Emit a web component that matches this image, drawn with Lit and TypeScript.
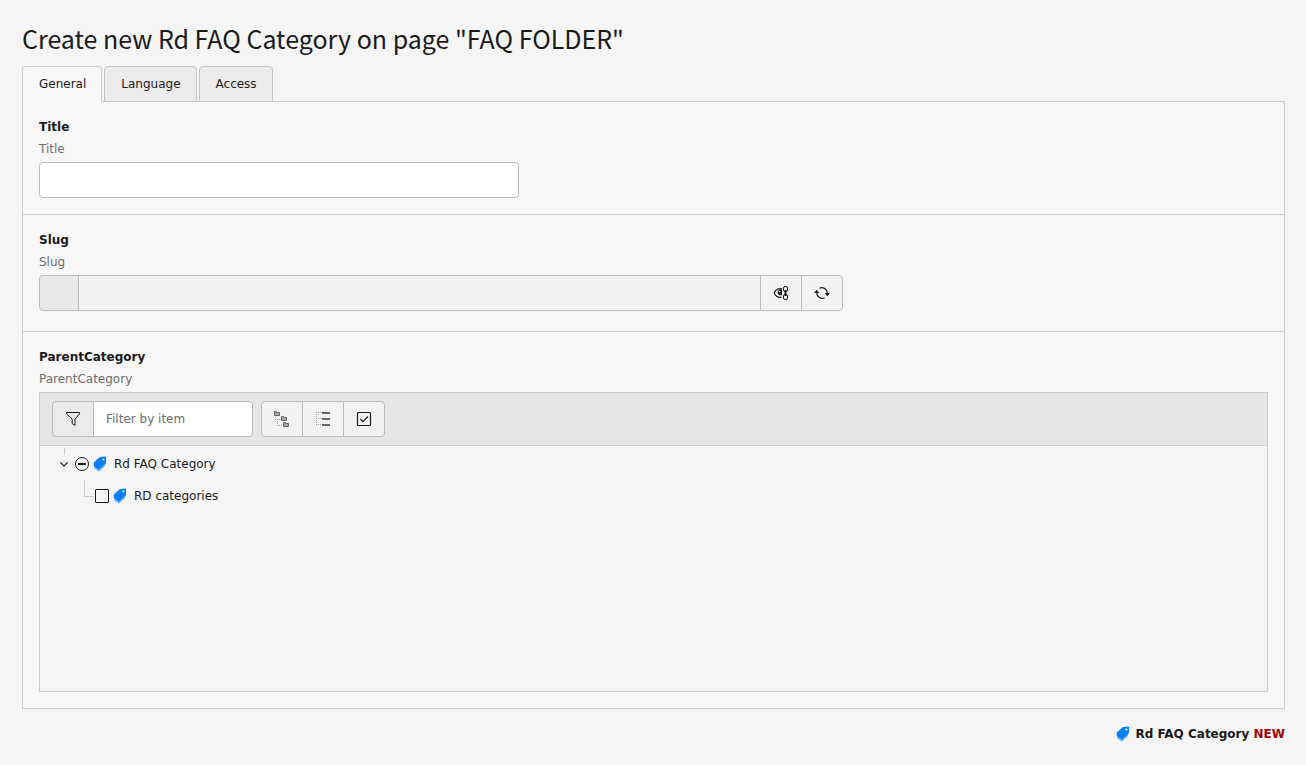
import { LitElement, html, svg, css } from "lit";
import { customElement, property, state } from "lit/decorators.js";
import { classMap } from "lit/directives/class-map.js";

const tagIcon = html`<svg class="icon" viewBox="0 0 16 16" aria-hidden="true">
  <path fill="#66b3ff" d="M2.300 8.500v4L7 15.600l6-5.600.500-4z" />
  <path fill="#0a80f5" d="M1.800 6.600 7.300 1.500q.5-.4 1.200-.500L13.200.5q.8 0 .8.8v5.200q0 .600-.500 1L7 13.400 1.800 10z" />
  <circle fill="#fff" cx="11.400" cy="3.600" r="1" />
</svg>`;

const dots = (points: number[][]) =>
  points.map(([x, y]) => svg`<rect fill="#999" x=${x} y=${y} width="1" height="1" />`);

const folder = (x: number, y: number) =>
  svg`<path fill="#aaa" stroke="#666" d="M${x + 0.5} ${y + 0.5}h2v1h3v3h-5z" />`;

const filterIcon = html`<svg class="icon" viewBox="0 0 16 16" aria-hidden="true">
  <path fill="none" stroke="#1a1a1a" d="M1.500 1.500h13v1.300L10 8.200v6.100l-2.800-1.600V8.200L1.500 2.800z" />
</svg>`;

const expandIcon = html`<svg class="icon" viewBox="0 0 16 16" aria-hidden="true">
  ${folder(0, 0)}${folder(7, 5)}${folder(9, 11)}
  ${dots([[1, 6], [1, 8], [3, 8], [5, 8], [3, 10], [3, 12], [3, 14], [5, 14], [7, 14]])}
</svg>`;

const collapseIcon = html`<svg class="icon" viewBox="0 0 16 16" aria-hidden="true">
  <path fill="#666" d="M7 1h8v2H7zM7 7h8v2H7zM7 13h8v2H7z" />
  ${dots([[1, 1], [3, 1], [5, 1], [1, 3], [1, 5], [1, 7], [3, 7], [5, 7], [1, 9], [1, 11], [1, 13], [3, 13], [5, 13]])}
</svg>`;

const checkedIcon = html`<svg class="icon" viewBox="0 0 16 16" aria-hidden="true">
  <rect x="1.500" y="1.500" width="13" height="13" rx="1" fill="none" stroke="#1a1a1a" stroke-width="1.200" />
  <path d="m4.300 8 2.600 2.600 5.100-5.100" fill="none" stroke="#1a1a1a" stroke-width="1.200" />
</svg>`;

const slugToggleIcon = html`<svg class="icon" viewBox="0 0 16 16" aria-hidden="true">
  <path fill="none" stroke="#1a1a1a" stroke-width="1.200" d="M9 3.800C5 3 2.200 5.300 1.300 8c.9 2.600 3.700 4.600 7.200 4.300" />
  <path fill="#1a1a1a" d="M9 4.500C6 3.800 4.300 5.800 4.600 8c.4 2 2.300 2.700 4.400 2.100z" />
  <circle cx="6.500" cy="6.500" r=".8" fill="#f2f2f2" />
  <rect x="10.500" y="1.500" width="4" height="5" rx="1.500" fill="none" stroke="#1a1a1a" />
  <rect x="10.500" y="9.500" width="4" height="5" rx="1.500" fill="none" stroke="#1a1a1a" />
  <path stroke="#1a1a1a" stroke-width="2" d="M12.500 5v6" />
</svg>`;

const refreshIcon = html`<svg class="icon" viewBox="0 0 16 16" aria-hidden="true">
  <path fill="none" stroke="#1a1a1a" stroke-width="1.200" d="M5.500 3.300C9 1.600 13.300 4 13.300 8M10.500 12.700C7 14.400 2.700 12 2.700 8" />
  <path fill="#1a1a1a" d="M10.600 8H16l-2.700 3.200zM0 8h5.400L2.700 4.800z" />
</svg>`;

const chevronIcon = html`<svg class="icon" viewBox="0 0 16 16" aria-hidden="true">
  <path fill="none" stroke="#1a1a1a" stroke-width="1.200" d="m4.300 6.300 3.700 3.700 3.700-3.700" />
</svg>`;

const shared = css`
  * { box-sizing: border-box; }
  button, input { font: inherit; color: inherit; margin: 0; }
  .icon { display: block; width: 16px; height: 16px; flex: none; }
  .group { display: flex; height: 36px; }
  .group > * { border: 1px solid #bbb; border-radius: 0; }
  .group > * + * { margin-left: -1px; }
  .group > :first-child { border-radius: 4px 0 0 4px; }
  .group > :last-child { border-radius: 0 4px 4px 0; }
  .group > input { flex: 1; min-width: 0; padding: 0 12px; background: #fff; }
  .button {
    display: flex; align-items: center; justify-content: center;
    width: 42px; padding: 0; background: #f2f2f2; cursor: pointer;
  }
  .addon { display: flex; align-items: center; justify-content: center; width: 40px; background: #e8e8e8; }
  input::placeholder { color: #6e6e6e; opacity: 1; }
`;

@customElement("category-tree")
class CategoryTree extends LitElement {
  @state() private open = true;

  static styles = [shared, css`
    :host { display: block; border: 1px solid #ccc; background: #f5f5f5; min-height: 300px; }
    .toolbar { display: flex; gap: 8px; padding: 8px 12px; background: #e6e6e6; border-bottom: 1px solid #ccc; }
    .filter { width: 201px; }
    .filter .addon { width: 42px; background: #ebebeb; }
    .tree { margin: 0; padding: 2px 16px; list-style: none; }
    .row { display: flex; align-items: center; height: 32px; }
    .children { margin: 0; padding: 0 0 0 28px; list-style: none; }
    .toggle { display: flex; margin-right: 2px; padding: 0; border: 0; background: none; cursor: pointer; }
    .check { appearance: none; width: 14px; height: 14px; margin: 0 3px 0 1px; border: 1px solid #1a1a1a; border-radius: 1px; }
    .check:indeterminate {
      border-radius: 50%;
      background: linear-gradient(#1a1a1a, #1a1a1a) center / 8px 2px no-repeat;
    }
    .check:checked { background: linear-gradient(#1a1a1a, #1a1a1a) center / 8px 8px no-repeat; }
    .name { padding-left: 6px; }
    .trunk {
      background:
        linear-gradient(#ccc, #ccc) 8px 0 / 1px 7px no-repeat,
        linear-gradient(#ccc, #ccc) 16px 16px / 2px 1px no-repeat;
    }
    .branch { align-self: flex-start; width: 10px; height: 17px; border: solid #ccc; border-width: 0 0 1px 1px; }
  `];

  render() {
    return html`
      <div class="toolbar">
        <div class="group filter">
          <label class="addon" for="filter" aria-label="Filter">${filterIcon}</label>
          <input id="filter" type="text" placeholder="Filter by item" />
        </div>
        <div class="group">
          <button class="button" aria-label="Expand all" @click=${() => (this.open = true)}>${expandIcon}</button>
          <button class="button" aria-label="Collapse all" @click=${() => (this.open = false)}>${collapseIcon}</button>
          <button class="button" aria-label="Toggle checked">${checkedIcon}</button>
        </div>
      </div>
      <ul class="tree">
        <li>
          <div class="row trunk">
            <button class="toggle" aria-label="Toggle children" @click=${() => (this.open = !this.open)}>${chevronIcon}</button>
            <input class="check" id="root" type="checkbox" .indeterminate=${true} />
            ${tagIcon}<label class="name" for="root">Rd FAQ Category</label>
          </div>
          ${this.open ? html`<ul class="children">
            <li class="row">
              <span class="branch"></span>
              <input class="check" id="child" type="checkbox" />
              ${tagIcon}<label class="name" for="child">RD categories</label>
            </li>
          </ul>` : null}
        </li>
      </ul>`;
  }
}

@customElement("form-section")
class FormSection extends LitElement {
  @property() name = "";

  static styles = css`
    :host { display: block; padding: 16px; }
    :host(:not(:last-child)) { border-bottom: 1px solid #ccc; }
    .label { font-weight: 700; line-height: 18px; margin-bottom: 4px; }
    .description { color: #6e6e6e; line-height: 18px; margin-bottom: 4px; }
  `;

  render() {
    return html`<div class="label">${this.name}</div>
      <div class="description">${this.name}</div>
      <slot></slot>`;
  }
}

@customElement("app-root")
class AppRoot extends LitElement {
  @state() private active = "General";

  static styles = [shared, css`
    :host {
      display: block; box-sizing: border-box; min-height: 100vh; padding: 20px 21px 20px 22px;
      background: #f5f5f5; color: #1a1a1a;
      font: 12px/18px "DejaVu Sans", Verdana, sans-serif;
    }
    h1 { margin: 0 0 10px; font: 400 25px/36px "Noto Sans CJK SC", "Source Sans Pro", sans-serif; }
    .tabs { display: flex; gap: 2px; }
    .tab {
      height: 36px; margin-bottom: -1px; padding: 0 15px 0 16px; cursor: pointer;
      border: 1px solid #c4c4c4; border-radius: 4px 4px 0 0; background: #ebebeb;
    }
    .active { position: relative; border-color: #ccc; border-bottom-color: #f7f7f7; background: #f7f7f7; }
    .panel { border: 1px solid #ccc; background: #f7f7f7; }
    .text { display: block; width: 100%; max-width: 480px; height: 36px; padding: 0 12px; border: 1px solid #bbb; border-radius: 4px; background: #fff; }
    .slug { max-width: 804px; margin-bottom: 4px; }
    .slug > input { background: #f2f2f2; }
    .record { display: flex; align-items: center; justify-content: flex-end; gap: 4px; margin-top: 16px; font-weight: 700; }
    .new { color: #a30000; }
  `];

  render() {
    return html`
      <h1>Create new Rd FAQ Category on page "FAQ FOLDER"</h1>
      <div class="tabs" role="tablist">
        ${["General", "Language", "Access"].map((tab) => html`<button
          role="tab"
          aria-selected=${this.active === tab}
          class=${classMap({ tab: true, active: this.active === tab })}
          @click=${() => (this.active = tab)}
        >${tab}</button>`)}
      </div>
      <div class="panel" role="tabpanel">
        <form-section name="Title">
          <input class="text" type="text" aria-label="Title" />
        </form-section>
        <form-section name="Slug">
          <div class="group slug">
            <span class="addon"></span>
            <input type="text" aria-label="Slug" readonly />
            <button class="button" aria-label="Toggle manual slug">${slugToggleIcon}</button>
            <button class="button" aria-label="Recalculate slug">${refreshIcon}</button>
          </div>
        </form-section>
        <form-section name="ParentCategory">
          <category-tree></category-tree>
        </form-section>
      </div>
      <div class="record">${tagIcon}<span>Rd FAQ Category <span class="new">NEW</span></span></div>`;
  }
}
